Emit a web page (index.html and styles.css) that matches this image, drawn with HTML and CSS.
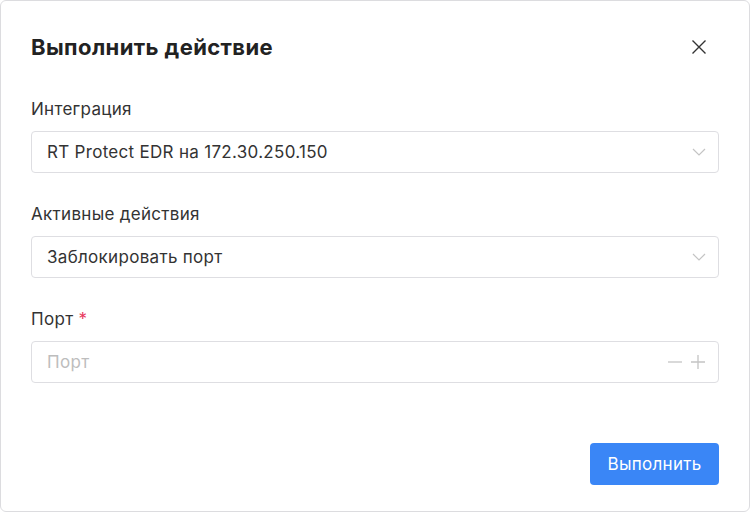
FILE: index.html
```html
<!DOCTYPE html>
<html lang="ru">
<head>
    <meta charset="UTF-8">
    <meta name="viewport" content="width=device-width, initial-scale=1.0">
    <title>Выполнить действие</title>
    <link rel="stylesheet" href="styles.css">
</head>
<body>
    <div class="modal">
        <div class="modal-header">
            <h2 class="modal-title">Выполнить действие</h2>
            <button class="modal-close" type="button">
                <svg width="16" height="16" viewBox="0 0 16 16">
                    <path d="M1.5 1.5 L14.5 14.5 M14.5 1.5 L1.5 14.5" stroke="#333" stroke-width="1.4" fill="none"/>
                </svg>
            </button>
        </div>

        <form class="modal-body" action="#" onsubmit="event.preventDefault();">
            <div class="form-item">
                <label class="form-label">Интеграция</label>
                <div class="select">
                    <span class="select-value">RT Protect EDR на 172.30.250.150</span>
                    <svg class="chevron" width="14" height="8" viewBox="0 0 14 8">
                        <path d="M1 1 L7 7 L13 1" stroke="#c4c4c4" stroke-width="1.2" fill="none"/>
                    </svg>
                </div>
            </div>

            <div class="form-item">
                <label class="form-label">Активные действия</label>
                <div class="select">
                    <span class="select-value">Заблокировать порт</span>
                    <svg class="chevron" width="14" height="8" viewBox="0 0 14 8">
                        <path d="M1 1 L7 7 L13 1" stroke="#c4c4c4" stroke-width="1.2" fill="none"/>
                    </svg>
                </div>
            </div>

            <div class="form-item">
                <label class="form-label">Порт <span class="required">*</span></label>
                <div class="number-input">
                    <input type="text" placeholder="Порт">
                    <div class="steppers">
                        <svg width="16" height="16" viewBox="0 0 16 16">
                            <path d="M1 8 L15 8" stroke="#c4c4c4" stroke-width="1.3"/>
                        </svg>
                        <svg width="16" height="16" viewBox="0 0 16 16">
                            <path d="M1 8 L15 8 M8 1 L8 15" stroke="#c4c4c4" stroke-width="1.3"/>
                        </svg>
                    </div>
                </div>
            </div>

            <div class="modal-footer">
                <button class="btn-primary" type="submit">Выполнить</button>
            </div>
        </form>
    </div>
</body>
</html>
```

FILE: styles.css
```css
*{
    margin: 0;
    padding: 0;
    box-sizing: border-box;
    font-family: Inter, 'Noto Sans', Arial, sans-serif;
}
body{
    background-color: #ffffff;
    width: 750px;
    height: 512px;
}
.modal{
    width: 750px;
    height: 512px;
    border: 1px solid #dcdcdf;
    border-radius: 6px;
    padding: 30px 30px 0 30px;
    background-color: white;
}
.modal-header{
    display: flex;
    align-items: center;
    justify-content: space-between;
    height: 32px;
}
.modal-title{
    font-size: 22px;
    font-weight: 700;
    color: #222222;
    letter-spacing: 0.4px;
}
.modal-close{
    background: none;
    border: none;
    width: 24px;
    height: 24px;
    display: flex;
    align-items: center;
    justify-content: center;
    margin-right: 8px;
    cursor: pointer;
}
.modal-body{
    margin-top: 34px;
}
.form-item{
    margin-bottom: 29px;
}
.form-label{
    display: block;
    font-size: 17px;
    letter-spacing: 0.3px;
    line-height: 24px;
    color: #333333;
    margin-bottom: 10px;
}
.required{
    color: #e8365d;
}
.select, .number-input{
    height: 42px;
    border: 1px solid #dedee2;
    border-radius: 4px;
    display: flex;
    align-items: center;
    justify-content: space-between;
    padding: 0 12px 0 15px;
}
.select-value{
    font-size: 17px;
    letter-spacing: 0.3px;
    color: #333333;
}
.number-input input{
    border: none;
    outline: none;
    font-size: 17px;
    letter-spacing: 0.3px;
    color: #333333;
    flex: 1;
    height: 100%;
    background: transparent;
}
.number-input input::placeholder{
    color: #bdbdbd;
}
.steppers{
    display: flex;
    gap: 7px;
}
.modal-footer{
    display: flex;
    justify-content: flex-end;
    margin-top: 60px;
}
.btn-primary{
    background-color: #3a86f6;
    color: white;
    border: none;
    border-radius: 4px;
    height: 42px;
    width: 129px;
    font-size: 17px;
    letter-spacing: 0.3px;
    cursor: pointer;
}
```
